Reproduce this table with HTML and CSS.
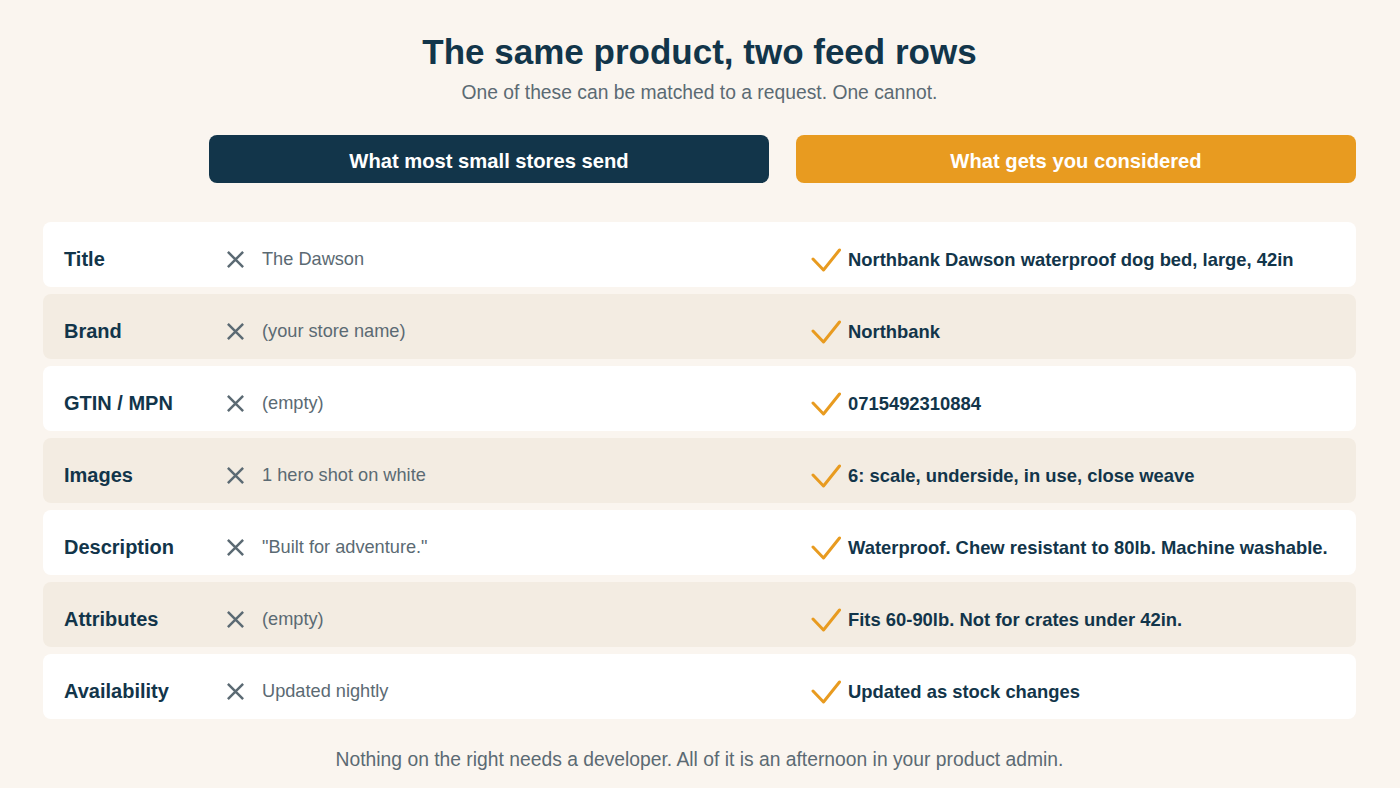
FILE: index.html
```html
<!DOCTYPE html>
<html>
<head>
<meta charset="utf-8">
<link rel="stylesheet" href="styles.css">
</head>
<body>
<main class="page">
  <header class="intro">
    <h1>The same product, two feed rows</h1>
    <p class="sub">One of these can be matched to a request. One cannot.</p>
  </header>

  <div class="heads">
    <div></div>
    <div class="head head-bad">What most small stores send</div>
    <div class="head head-good">What gets you considered</div>
  </div>

  <div class="rows">
    <div class="row">
      <div class="label">Title</div>
      <div class="cell bad"><svg class="x" viewBox="0 0 20 20"><path d="M2 2L18 18M18 2L2 18"/></svg><span>The Dawson</span></div>
      <div class="cell good"><svg class="ok" viewBox="0 0 30 24"><path d="M2 11L12.5 22L28.5 2"/></svg><span>Northbank Dawson waterproof dog bed, large, 42in</span></div>
    </div>
    <div class="row alt">
      <div class="label">Brand</div>
      <div class="cell bad"><svg class="x" viewBox="0 0 20 20"><path d="M2 2L18 18M18 2L2 18"/></svg><span>(your store name)</span></div>
      <div class="cell good"><svg class="ok" viewBox="0 0 30 24"><path d="M2 11L12.5 22L28.5 2"/></svg><span>Northbank</span></div>
    </div>
    <div class="row">
      <div class="label">GTIN / MPN</div>
      <div class="cell bad"><svg class="x" viewBox="0 0 20 20"><path d="M2 2L18 18M18 2L2 18"/></svg><span>(empty)</span></div>
      <div class="cell good"><svg class="ok" viewBox="0 0 30 24"><path d="M2 11L12.5 22L28.5 2"/></svg><span>0715492310884</span></div>
    </div>
    <div class="row alt">
      <div class="label">Images</div>
      <div class="cell bad"><svg class="x" viewBox="0 0 20 20"><path d="M2 2L18 18M18 2L2 18"/></svg><span>1 hero shot on white</span></div>
      <div class="cell good"><svg class="ok" viewBox="0 0 30 24"><path d="M2 11L12.5 22L28.5 2"/></svg><span>6: scale, underside, in use, close weave</span></div>
    </div>
    <div class="row">
      <div class="label">Description</div>
      <div class="cell bad"><svg class="x" viewBox="0 0 20 20"><path d="M2 2L18 18M18 2L2 18"/></svg><span>"Built for adventure."</span></div>
      <div class="cell good"><svg class="ok" viewBox="0 0 30 24"><path d="M2 11L12.5 22L28.5 2"/></svg><span>Waterproof. Chew resistant to 80lb. Machine washable.</span></div>
    </div>
    <div class="row alt">
      <div class="label">Attributes</div>
      <div class="cell bad"><svg class="x" viewBox="0 0 20 20"><path d="M2 2L18 18M18 2L2 18"/></svg><span>(empty)</span></div>
      <div class="cell good"><svg class="ok" viewBox="0 0 30 24"><path d="M2 11L12.5 22L28.5 2"/></svg><span>Fits 60-90lb. Not for crates under 42in.</span></div>
    </div>
    <div class="row">
      <div class="label">Availability</div>
      <div class="cell bad"><svg class="x" viewBox="0 0 20 20"><path d="M2 2L18 18M18 2L2 18"/></svg><span>Updated nightly</span></div>
      <div class="cell good"><svg class="ok" viewBox="0 0 30 24"><path d="M2 11L12.5 22L28.5 2"/></svg><span>Updated as stock changes</span></div>
    </div>
  </div>

  <p class="foot">Nothing on the right needs a developer. All of it is an afternoon in your product admin.</p>
</main>
</body>
</html>
```

FILE: styles.css
```css
* { box-sizing: border-box; }
html, body { margin: 0; padding: 0; }
body {
  background: #faf5ef;
  font-family: "Liberation Sans", Arial, sans-serif;
  color: #12354a;
}
.page {
  width: 1313px;
  margin: 0 0 0 43px;
  padding-top: 31px;
}
.intro { text-align: center; }
h1 {
  margin: 0;
  font-size: 35px;
  line-height: 42px;
  font-weight: 700;
  color: #12354a;
}
.sub {
  margin: 8px 0 0;
  font-size: 19.3px;
  line-height: 24px;
  color: #5b6a73;
}
.heads {
  display: grid;
  grid-template-columns: 139px 560px 560px;
  column-gap: 27px;
  margin-top: 30px;
}
.head {
  height: 48px;
  padding-top: 4px;
  border-radius: 8px;
  display: flex;
  align-items: center;
  justify-content: center;
  color: #fff;
  font-weight: 700;
  font-size: 20.2px;
}
.head-bad { background: #12354a; }
.head-good { background: #e89b20; }
.rows {
  margin-top: 39px;
  display: flex;
  flex-direction: column;
  gap: 7px;
}
.row {
  display: grid;
  grid-template-columns: 139px 560px 560px;
  column-gap: 27px;
  align-items: center;
  height: 65px;
  padding-top: 10px;
  background: #fff;
  border-radius: 8px;
}
.row.alt { background: #f3ece2; }
.label {
  padding-left: 21px;
  font-size: 20px;
  font-weight: 700;
  color: #12354a;
  white-space: nowrap;
}
.cell {
  display: flex;
  align-items: center;
}
.cell.bad {
  padding-left: 17px;
  gap: 17px;
  font-size: 18.2px;
  color: #5b6a73;
}
.cell.good {
  padding-left: 15px;
  gap: 7px;
  font-size: 18.4px;
  font-weight: 700;
  color: #12354a;
}
.x {
  width: 19px;
  height: 19px;
  fill: none;
  stroke: #5b6a73;
  stroke-width: 2.6;
}
.ok {
  width: 30px;
  height: 24px;
  fill: none;
  stroke: #e89b20;
  stroke-width: 3;
  stroke-linecap: round;
  stroke-linejoin: round;
}
.foot {
  margin: 29px 0 0;
  text-align: center;
  font-size: 19.3px;
  line-height: 24px;
  color: #5b6a73;
}
```
